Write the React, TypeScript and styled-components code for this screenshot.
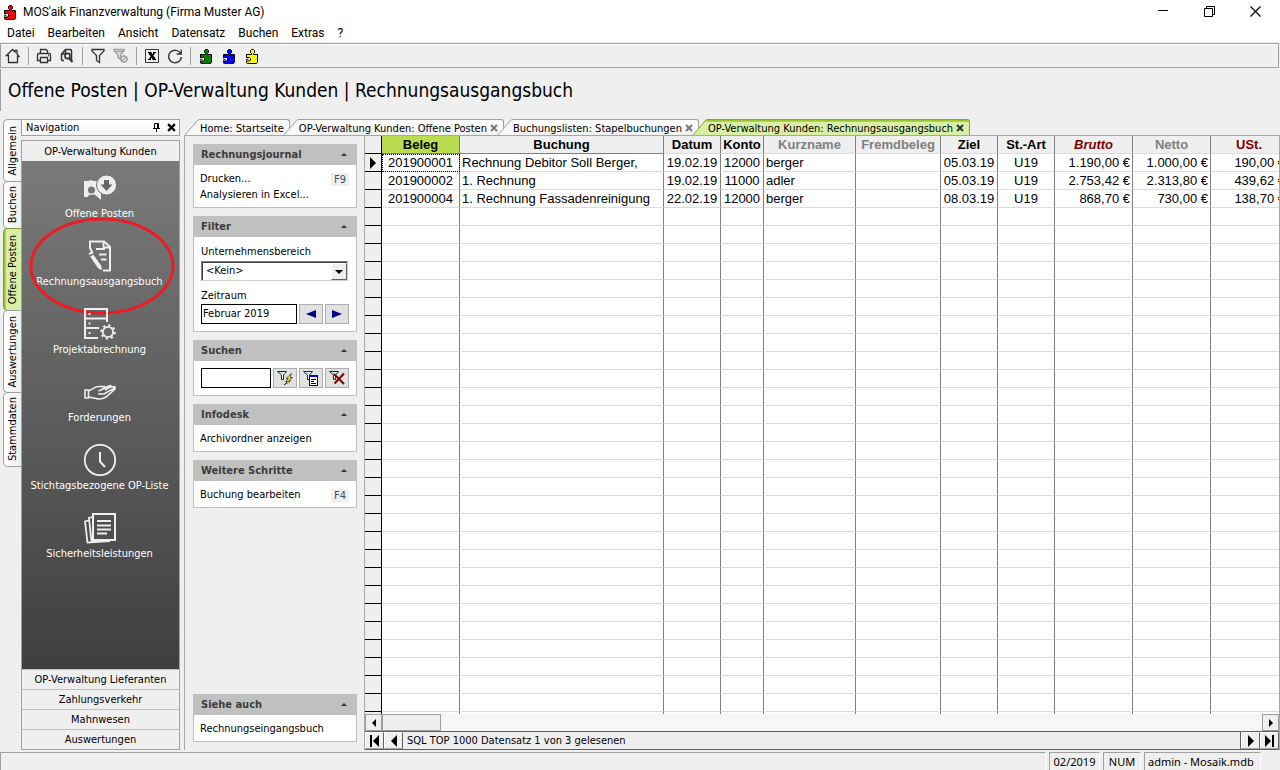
import React from "react";
import styled, { createGlobalStyle, css } from "styled-components";

const uiFont = `"DejaVu Sans Condensed", "DejaVu Sans", sans-serif`;
const systemFont = `Roboto, "Open Sans", sans-serif`;
const gridFont = `"Liberation Sans", Arial, sans-serif`;

const GlobalStyle = createGlobalStyle`
  *, *::before, *::after { box-sizing: border-box; }
  body { margin: 0; background: #efefef; color: #000; font: 11px/16px ${uiFont}; }
  button, input, select { font: inherit; color: inherit; margin: 0; padding: 0; border-radius: 0; }
  button { border: 0; background: none; display: block; }
  a { color: inherit; text-decoration: none; }
  svg { display: block; }
`;

const Window = styled.div`
  display: flex;
  flex-direction: column;
  height: 100vh;
  min-height: 640px;
  overflow: hidden;
`;

/* ---------- title and menu ---------- */

const TitleBar = styled.header`
  display: flex;
  align-items: center;
  flex: none;
  height: 23px;
  padding: 0 2px 0 3px;
  gap: 6px;
  background: #fff;
  font: 12px/16px ${systemFont};
`;

const TitleText = styled.span`
  flex: 1;
`;

const WindowButtons = styled.div`
  display: flex;
`;

const WindowButton = styled.button`
  display: flex;
  align-items: center;
  justify-content: center;
  width: 46px;
  height: 20px;
`;

const MenuBar = styled.nav`
  display: flex;
  flex: none;
  gap: 13px;
  height: 19px;
  padding: 2px 7px 0;
  background: #fff;
  font: 12px/16px ${systemFont};
`;

const ToolBar = styled.div`
  display: flex;
  align-items: center;
  flex: none;
  height: 25px;
  margin: 1px 1px 0 0;
  border: 1px solid #a0a0a0;
  box-shadow: inset 0 1px 0 #fff;
`;

const ToolButton = styled.button`
  display: flex;
  align-items: center;
  justify-content: center;
  width: 23px;
  height: 22px;
`;

const ToolSeparator = styled.span`
  width: 1px;
  height: 18px;
  margin: 0 3px 0 4px;
  background: #a0a0a0;
`;

const PageTitle = styled.h1`
  flex: none;
  margin: 1px 0 8px;
  padding: 0 0 0 7px;
  border-left: 1px solid #a0a0a0;
  font: 19px/42px ${uiFont};
  white-space: nowrap;
`;

/* ---------- main columns ---------- */

const Main = styled.main`
  display: flex;
  flex: 1;
  min-height: 0;
  padding-left: 3px;
`;

const SideTabs = styled.div`
  display: flex;
  flex-direction: column;
  flex: none;
  width: 18px;
`;

const SideTab = styled.button<{ $size: number; $active?: boolean }>`
  display: flex;
  align-items: center;
  justify-content: center;
  height: ${(p) => p.$size}px;
  margin-bottom: -1px;
  border: 1px solid #a0a0a0;
  border-right-width: 0;
  border-radius: 5px 0 0 5px;
  background: linear-gradient(to right, #fff, #efefef);
  ${(p) =>
    p.$active &&
    css`
      border-color: #7a9a35;
      background: linear-gradient(to right, #8fc31f 0, #b4d95a 2px, #d9efa5 2px, #d9efa5 100%);
    `}
  span {
    writing-mode: vertical-rl;
    transform: rotate(180deg);
    white-space: nowrap;
  }
`;

const Navigation = styled.aside`
  display: flex;
  flex-direction: column;
  flex: none;
  gap: 4px;
  width: 159px;
  margin-right: 4px;
`;

const NavCaption = styled.div`
  display: flex;
  align-items: center;
  flex: none;
  gap: 7px;
  height: 17px;
  padding: 0 3px 0 4px;
  border: 1px solid #a0a0a0;
  background: linear-gradient(#fff, #f4f4f4);
  line-height: 15px;
  span { flex: 1; }
`;

const Accordion = styled.div`
  display: flex;
  flex-direction: column;
  flex: 1;
  min-height: 0;
  border: 1px solid #a0a0a0;
`;

const AccordionHeader = styled.button<{ $divided?: boolean }>`
  flex: none;
  width: 100%;
  height: 20px;
  padding-top: 1px;
  text-align: center;
  border-top: ${(p) => (p.$divided ? "1px solid #c0c0c0" : "0")};
`;

const NavList = styled.div`
  display: flex;
  flex-direction: column;
  flex: 1;
  gap: 18px;
  min-height: 0;
  padding: 11px 2px 0 0;
  background: linear-gradient(#7a7a7a, #3f3f3f);
  color: #fff;
`;

const NavItem = styled.a`
  position: relative;
  display: flex;
  flex-direction: column;
  align-items: center;
  gap: 2px;
  white-space: nowrap;
`;

const Highlight = styled.svg`
  position: absolute;
  left: 7px;
  top: -23px;
`;

/* ---------- document area ---------- */

const Documents = styled.section`
  display: flex;
  flex-direction: column;
  flex: 1;
  min-width: 0;
`;

const TabStrip = styled.div`
  display: flex;
  flex: none;
  height: 17px;
  padding-left: 1px;
  background: linear-gradient(#aca899, #aca899) bottom / 100% 1px no-repeat;
`;

const DocTab = styled.div<{ $active?: boolean }>`
  display: flex;
  height: ${(p) => (p.$active ? 17 : 16)}px;
  margin-right: -6px;
`;

const DocTabBody = styled.div<{ $active?: boolean }>`
  display: flex;
  align-items: center;
  gap: 3px;
  height: 16px;
  padding-right: 5px;
  border: 1px solid ${(p) => (p.$active ? "#7fa336" : "#a0a0a0")};
  border-left: 0;
  border-bottom: 0;
  border-top-right-radius: 3px;
  background: ${(p) =>
    p.$active ? "linear-gradient(#8fc31f 0, #b4d95a 2px, #d9efa5 2px)" : "linear-gradient(#fff, #f1f1f1)"};
  line-height: 15px;
  white-space: nowrap;
  a { padding-top: 2px; }
`;

const Workspace = styled.div`
  display: flex;
  flex: 1;
  min-height: 0;
  border-right: 1px solid #aca899;
`;

const TaskPane = styled.div`
  display: flex;
  flex-direction: column;
  flex: none;
  gap: 8px;
  width: 181px;
  padding: 8px 7px 8px 8px;
  border: solid #aca899;
  border-width: 0 1px;
`;

const Card = styled.section<{ $last?: boolean }>`
  border: 1px solid #c0c0c0;
  border-top: 0;
  background: #fff;
  margin-top: ${(p) => (p.$last ? "auto" : "0")};
`;

const CardHeader = styled.h2`
  display: flex;
  align-items: center;
  justify-content: space-between;
  height: 21px;
  margin: 0;
  padding: 0 9px 0 7px;
  background: #c0c0c0;
  color: #3c3c3c;
  font-size: 11px;
  line-height: 21px;
`;

const CardBody = styled.div<{ $form?: boolean }>`
  display: flex;
  flex-direction: column;
  padding: ${(p) => (p.$form ? "7px" : "6px 7px 4px")};
`;

const TaskRow = styled.div`
  display: flex;
  align-items: center;
  justify-content: space-between;
  height: 16px;
  a { margin-left: -1px; }
`;

const Key = styled.kbd`
  width: 18px;
  background: #efefef;
  color: #3b4f5f;
  font: 11px/13px ${uiFont};
  text-align: center;
`;

const FieldLabel = styled.label`
  height: 16px;
`;

const SelectBox = styled.div`
  display: grid;
  grid-template-columns: 1fr 16px;
  height: 20px;
  margin: 1px 1px 7px 0;
  border: 1px solid #d4d0c8;
  border-top-color: #808080;
  border-left-color: #808080;
  box-shadow: inset 1px 1px 0 #404040;
  background: #fff;
`;

const Select = styled.select`
  grid-area: 1 / 1 / 2 / 3;
  width: 100%;
  padding: 0 4px;
  border: 0;
  appearance: none;
  background: transparent;
`;

const SelectArrow = styled.span`
  grid-area: 1 / 2 / 2 / 3;
  display: flex;
  align-items: center;
  justify-content: center;
  margin-top: 1px;
  border: 1px solid #fff;
  border-right-color: #606060;
  border-bottom-color: #606060;
  background: #efefef;
  pointer-events: none;
`;

const FieldRow = styled.div`
  display: flex;
  gap: 2px;
  height: 20px;
`;

const TextInput = styled.input`
  flex: 1;
  min-width: 0;
  padding: 0 1px;
  border: 1px solid #000;
  background: #fff;
`;

const SmallButton = styled.button`
  display: flex;
  align-items: center;
  justify-content: center;
  flex: none;
  width: 24px;
  border: 1px solid #adadad;
  background: #e1e1e1;
`;

/* ---------- data grid ---------- */

const GridPane = styled.div`
  display: flex;
  flex-direction: column;
  flex: 1;
  min-width: 0;
`;

const GridScroll = styled.div`
  flex: 1;
  min-height: 0;
  overflow: hidden;
  background: #fff;
`;

const Table = styled.table`
  width: 923px;
  table-layout: fixed;
  border-spacing: 0;
  font: 13px/17px ${gridFont};
`;

const Column = styled.col<{ $width: number }>`
  width: ${(p) => p.$width}px;
`;

const HeaderCell = styled.th<{ $color?: string; $italic?: boolean; $sorted?: boolean; $dark?: boolean }>`
  height: 18px;
  padding: 0;
  border-right: 1px solid #808080;
  border-bottom: 1px solid ${(p) => (p.$dark ? "#808080" : "#dcdcdc")};
  background: ${(p) => (p.$sorted ? "#b9dc50" : "#efefef")};
  color: ${(p) => p.$color || "#000"};
  font-style: ${(p) => (p.$italic ? "italic" : "normal")};
  white-space: nowrap;
`;

const SelectorHead = styled.th`
  height: 18px;
  padding: 0;
  border-right: 1px solid #000;
  border-bottom: 1px solid #000;
  background: #efefef;
`;

const SelectorCell = styled.td`
  height: 18px;
  padding: 0 0 0 5px;
  border-right: 1px solid #000;
  border-bottom: 1px solid #000;
  background: #efefef;
`;

const Cell = styled.td<{ $align?: string; $focused?: boolean }>`
  height: 18px;
  padding: 0 2px;
  border-right: 1px solid #808080;
  border-bottom: 1px solid #dcdcdc;
  text-align: ${(p) => p.$align || "left"};
  white-space: nowrap;
  ${(p) => p.$focused && css`outline: 1px dotted #000; outline-offset: -1px;`}
`;

const ScrollBar = styled.div`
  display: flex;
  flex: none;
  height: 17px;
  background: repeating-conic-gradient(#fff 0 25%, #efefef 0 50%) 0 0 / 2px 2px;
`;

const ScrollButton = styled.button`
  display: flex;
  align-items: center;
  justify-content: center;
  width: 17px;
  border: 1px solid #a0a0a0;
  background: #efefef;
`;

const ScrollThumb = styled.div`
  width: 59px;
  border: 1px solid #a0a0a0;
  background: #efefef;
`;

const Spacer = styled.div`
  flex: 1;
`;

const RecordBar = styled.div`
  display: flex;
  flex: none;
  height: 19px;
  border: solid #606060;
  border-width: 1px 0;
  line-height: 18px;
`;

const RecordButton = styled.button`
  display: flex;
  align-items: center;
  justify-content: center;
  width: 19px;
  border: 1px solid #fff;
  border-right-color: #606060;
  border-bottom-color: #a0a0a0;
`;

const RecordText = styled.span`
  flex: 1;
  padding-left: 4px;
  border-right: 1px solid #606060;
`;

/* ---------- status bar ---------- */

const StatusBar = styled.footer`
  display: flex;
  flex: none;
  gap: 3px;
  height: 18px;
  margin-top: 2px;
  padding-right: 19px;
  font: 11px/17px "Noto Sans", sans-serif;
`;

const StatusPanel = styled.div<{ $width?: number }>`
  flex: ${(p) => (p.$width ? "none" : "1")};
  width: ${(p) => (p.$width ? p.$width + "px" : "auto")};
  padding-left: 3px;
  border: 1px solid #a0a0a0;
  border-right-color: #fff;
  border-bottom: 0;
  white-space: nowrap;
`;

const StatusCenter = styled(StatusPanel)`
  padding-left: 0;
  text-align: center;
`;

/* ---------- drawings ---------- */

const Puzzle = ({ color }: { color: string }) => (
  <svg width="14" height="16" viewBox="0 0 14 16" aria-hidden="true">
    <path
      d="M1.5 6.5H6.5V5.5L5.5 4.5V2.5L6.5 1.5H8.5L9.5 2.5V4.5L8.5 5.5V6.5H12.5V14.5Q12 15.5 11 15.5H2.5Q1.5 15.5 1.5 14.5Z"
      fill={color}
      stroke="#000"
    />
    <path d="M1 9.5H4.5L5.5 10.5V12L4.5 13H1" fill="#fff" stroke="#000" />
    <path d="M1 11.3H3.5" stroke="#000" />
  </svg>
);

const Line = ({ children, size = 16, color = "#333" }: { children: React.ReactNode; size?: number; color?: string }) => (
  <svg width={size} height={size} viewBox={`0 0 ${size} ${size}`} fill="none" stroke={color} aria-hidden="true">
    {children}
  </svg>
);

const HomeIcon = () => (
  <Line>
    <path d="M1.5 7.5 7.5 1.5 10 4V2.5H12V6L14 8.5H12.5V14.5H3.5V7.5Z" strokeWidth="1.3" />
  </Line>
);
const PrintIcon = () => (
  <Line>
    <path d="M4.5 5.5V1.5H10L11.5 3V5.5M4.5 12.5H1.5V7Q1.5 5.5 3 5.5H13Q14.5 5.5 14.5 7V12.5H11.5M4.5 9.5H11.5V14.5H4.5Z" strokeWidth="1.3" />
    <path d="M12 7.5H13" strokeWidth="1.3" />
  </Line>
);
const PreviewIcon = () => (
  <Line>
    <path d="M5 12.5H3.5Q2.5 12.5 2.5 11V6L6.5 1.5H11Q12.5 1.5 12.5 3V12M6.5 2V6H2.5" strokeWidth="1.5" />
    <circle cx="8.5" cy="8" r="2.6" strokeWidth="1.6" />
    <path d="M10 10 13.5 14" strokeWidth="2" />
  </Line>
);
const FilterIcon = () => (
  <Line>
    <path d="M2 1.5H14V3L9.5 7.5V14.5L6.5 12.5V7.5L2 3Z" strokeWidth="1.3" />
  </Line>
);
const FilterOffIcon = () => (
  <Line color="#a0a0a0">
    <path d="M1 1.5H11V3L7.5 6.5V11L5 9.5V6.5L1 3ZM3 3.5H10" strokeWidth="1.5" />
    <circle cx="11" cy="11" r="3" strokeWidth="1.5" />
    <path d="M9 13 13 9" strokeWidth="1.3" />
  </Line>
);
const ExcelIcon = () => (
  <Line>
    <path d="M1.5 1.5H14.5V14.5H1.5Z" />
    <path d="M5.5 4.5 10.5 11.5" stroke="#000" strokeWidth="2.8" />
    <path d="M10.8 4.5 5.2 11.5" stroke="#000" strokeWidth="1.4" />
    <path d="M4 4.5H7.5M9 4.5H12M4 11.5H7M8.5 11.5H12" stroke="#000" />
  </Line>
);
const RefreshIcon = () => (
  <Line>
    <path d="M13.8 6A6.3 6.3 0 1 0 14.3 9M14.2 1.5V6H9.7" strokeWidth="1.4" />
  </Line>
);

const CrossIcon = ({ color = "#222", size = 8 }: { color?: string; size?: number }) => (
  <svg width={size} height={size} viewBox="0 0 8 8" aria-hidden="true">
    <path d="M1 1 7 7M7 1 1 7" stroke={color} strokeWidth="2" />
  </svg>
);

const Triangle = ({ dir, size, color = "#000" }: { dir: "l" | "r" | "u" | "d"; size: number; color?: string }) => {
  const half = size;
  const wide = size * 2;
  const shape = {
    l: [half, wide, `M${half} 0V${wide}L0 ${half}Z`],
    r: [half, wide, `M0 0V${wide}L${half} ${half}Z`],
    u: [wide, half, `M0 ${half}H${wide}L${half} 0Z`],
    d: [wide, half, `M0 0H${wide}L${half} ${half}Z`],
  }[dir] as [number, number, string];
  return (
    <svg width={shape[0]} height={shape[1]} aria-hidden="true">
      <path d={shape[2]} fill={color} />
    </svg>
  );
};

const PeriodArrow = ({ back }: { back?: boolean }) => (
  <svg width="10" height="8" aria-hidden="true">
    <path d={back ? "M10 0V8L0 4Z" : "M0 0V8L10 4Z"} fill="#000080" />
  </svg>
);

const EndArrow = ({ first }: { first?: boolean }) => (
  <svg width="11" height="12" aria-hidden="true">
    <path d={first ? "M1 0H3V12H1ZM10 0V12L4 6Z" : "M8 0H10V12H8ZM1 0V12L7 6Z"} />
  </svg>
);

const SmallFunnel = () => (
  <>
    <path d="M1.5 1.5H10.5L7.5 5V9.5H5.5V5Z" fill="#fff" stroke="#222" />
    <path d="M4 2.5H7L5.8 4.2Z" fill="#6cc" />
  </>
);
const SearchRunIcon = () => (
  <svg width="18" height="16" aria-hidden="true">
    <SmallFunnel />
    <path d="M15.5 3.5 10 8.5H12.5L9.5 11.5H11.5L8 15 14.5 11H12.5L16.5 7.5H14Z" fill="#ff0" stroke="#333" strokeWidth=".8" />
  </svg>
);
const SearchListIcon = () => (
  <svg width="18" height="16" aria-hidden="true">
    <SmallFunnel />
    <path d="M7.5 6.5H15.5V15.5H7.5Z" fill="#fff" stroke="#000" />
    <path d="M7 6H16" stroke="#00f" strokeWidth="2" />
    <path d="M9 9.5H14M9 11.5H12M9 13.5H14" stroke="#000" />
  </svg>
);
const SearchClearIcon = () => (
  <svg width="18" height="16" aria-hidden="true">
    <SmallFunnel />
    <path d="M6 4 16 14M16 3.5 6.5 13.5" stroke="#800000" strokeWidth="2" />
  </svg>
);

const TabSlant = ({ active }: { active?: boolean }) => (
  <svg width="15" height="16" viewBox="0 0 15 16" aria-hidden="true">
    <path d="M0 16 13 1.5 15 .5V16Z" fill={active ? "#d9efa5" : "#f8f8f8"} />
    {active && <path d="M12 1.5H15" stroke="#9fcf3a" strokeWidth="2" />}
    <path d="M0 16 12.5 1.5Q13.5.5 15 .5" fill="none" stroke={active ? "#7fa336" : "#a0a0a0"} />
  </svg>
);

const navIcons: Record<string, React.ReactNode> = {
  open: (
    <>
      <path d="M0 9H4Q7 7.5 10 9H14V18L17 22V28L12.5 24 9.5 22H6L3.5 25H0Z" fill="#eee" stroke="none" />
      <circle cx="7.5" cy="18" r="4.3" fill="#777" stroke="#eee" strokeWidth="1.5" />
      <circle cx="22.5" cy="13" r="10" fill="#eee" stroke="#777" strokeWidth="1" />
      <path d="M20 8H25V12.5H28.5L22.5 19 16.5 12.5H20Z" fill="#666" stroke="none" />
    </>
  ),
  book: (
    <>
      <path d="M8.5 13 6 8V1.5H20L26 7V30.5H19" strokeWidth="2" />
      <path d="M19.5 1.5V7.5H26M12 9H21M15 14.5H22.5M17 19.5H22.5" strokeWidth="1.8" />
      <path d="M5.5 16.5 9.5 14 18 26 18.5 31 14 29Z" fill="#eee" stroke="#666" strokeWidth="1" />
      <path d="M4.5 15 5.5 12.5 8 12 9.5 13.5Z" fill="#eee" stroke="none" />
    </>
  ),
  project: (
    <>
      <path d="M23 14V1H1V30H14M1 10.5H23M1 20H15" strokeWidth="2" />
      <path d="M4.5 6H6.5M4.5 15.5H6.5M4.5 25H6.5" strokeWidth="2" />
      <circle cx="24" cy="24" r="5.2" strokeWidth="1.8" />
      <circle cx="24" cy="24" r="6.8" strokeWidth="2" strokeDasharray="2.2 3.14" />
    </>
  ),
  hand: (
    <>
      <path d="M1 14H4.5V22H1ZM4.5 15C9 13 11 10.5 15 10.5H20Q23 11.5 19 13L14.5 15M18 13 26 9.5Q28 9.5 26 11L21 14M25 11.5 30 10.5Q32 11.5 30.5 13.5L22 21Q17 24 12 22.5L4.5 21M14 18H20L30.5 12" strokeWidth="1.6" />
    </>
  ),
  clock: (
    <>
      <circle cx="16" cy="16" r="15.2" strokeWidth="1.8" />
      <path d="M16 8V17.5L21 23" strokeWidth="2" />
    </>
  ),
  papers: (
    <>
      <path d="M9 2H31V28H9Z" strokeWidth="2" />
      <path d="M13 9H27M13 13.5H27M13 17.5H27M13 21.5H23" strokeWidth="1.8" />
      <path d="M8.5 5 5 6 7.5 29.5 9 28.5M4.5 8.5 1 9.5 3.5 30.5 26 29" strokeWidth="1.8" />
    </>
  ),
};

const NavIcon = ({ name }: { name: string }) => (
  <svg width="32" height="32" viewBox="0 0 32 32" fill="none" stroke="#eee" aria-hidden="true">
    {navIcons[name]}
  </svg>
);

/* ---------- data ---------- */

const menus = ["Datei", "Bearbeiten", "Ansicht", "Datensatz", "Buchen", "Extras", "?"];

const sideTabs = [
  { label: "Allgemein", size: 63 },
  { label: "Buchen", size: 48 },
  { label: "Offene Posten", size: 83, active: true },
  { label: "Auswertungen", size: 83 },
  { label: "Stammdaten", size: 75 },
];

const navItems = [
  { icon: "open", label: "Offene Posten" },
  { icon: "book", label: "Rechnungsausgangsbuch", marked: true },
  { icon: "project", label: "Projektabrechnung" },
  { icon: "hand", label: "Forderungen" },
  { icon: "clock", label: "Stichtagsbezogene OP-Liste" },
  { icon: "papers", label: "Sicherheitsleistungen" },
];

const navGroups = ["OP-Verwaltung Lieferanten", "Zahlungsverkehr", "Mahnwesen", "Auswertungen"];

const docTabs = [
  { label: "Home: Startseite" },
  { label: "OP-Verwaltung Kunden: Offene Posten", closable: true },
  { label: "Buchungslisten: Stapelbuchungen", closable: true },
  { label: "OP-Verwaltung Kunden: Rechnungsausgangsbuch", closable: true, active: true },
];

type Col = { name: string; width: number; align?: string; color?: string; italic?: boolean; sorted?: boolean; dark?: boolean };
const columns: Col[] = [
  { name: "Beleg", width: 78, align: "center", sorted: true, dark: true },
  { name: "Buchung", width: 204, dark: true },
  { name: "Datum", width: 57, align: "center" },
  { name: "Konto", width: 43, align: "center" },
  { name: "Kurzname", width: 92, color: "#808080" },
  { name: "Fremdbeleg", width: 85, color: "#808080" },
  { name: "Ziel", width: 57, align: "center" },
  { name: "St.-Art", width: 57, align: "center" },
  { name: "Brutto", width: 78, align: "right", color: "#800000", italic: true },
  { name: "Netto", width: 78, align: "right", color: "#808080" },
  { name: "USt.", width: 77, align: "right", color: "#800000" },
];

const records = [
  ["201900001", "Rechnung Debitor Soll Berger,", "19.02.19", "12000", "berger", "", "05.03.19", "U19", "1.190,00 €", "1.000,00 €", "190,00 €"],
  ["201900002", "1. Rechnung", "19.02.19", "11000", "adler", "", "05.03.19", "U19", "2.753,42 €", "2.313,80 €", "439,62 €"],
  ["201900004", "1. Rechnung Fassadenreinigung", "22.02.19", "12000", "berger", "", "08.03.19", "U19", "868,70 €", "730,00 €", "138,70 €"],
];

const rows = [...records, ...Array.from({ length: 57 }, () => columns.map(() => ""))];

const TaskCard = ({ title, form, last, children }: { title: string; form?: boolean; last?: boolean; children: React.ReactNode }) => (
  <Card $last={last}>
    <CardHeader>
      {title}
      <Triangle dir="u" size={3} color="#333" />
    </CardHeader>
    <CardBody $form={form}>{children}</CardBody>
  </Card>
);

const DataGrid = () => (
  <Table>
    <colgroup>
      <Column $width={17} />
      {columns.map((c) => (
        <Column key={c.name} $width={c.width} />
      ))}
    </colgroup>
    <thead>
      <tr>
        <SelectorHead aria-label="Auswahl" />
        {columns.map((c) => (
          <HeaderCell key={c.name} $color={c.color} $italic={c.italic} $sorted={c.sorted} $dark={c.dark}>
            {c.name}
          </HeaderCell>
        ))}
      </tr>
    </thead>
    <tbody>
      {rows.map((row, r) => (
        <tr key={r}>
          <SelectorCell>{r === 0 && <Triangle dir="r" size={6} />}</SelectorCell>
          {row.map((value, c) => (
            <Cell key={c} $align={columns[c].align} $focused={r === 0 && c === 0}>
              {value}
            </Cell>
          ))}
        </tr>
      ))}
    </tbody>
  </Table>
);

export default function App() {
  return (
    <Window>
      <GlobalStyle />
      <TitleBar>
        <Puzzle color="#f00" />
        <TitleText>MOS'aik Finanzverwaltung (Firma Muster AG)</TitleText>
        <WindowButtons>
          <WindowButton aria-label="Minimieren">
            <svg width="11" height="11"><path d="M0 4.5H10" stroke="#000" /></svg>
          </WindowButton>
          <WindowButton aria-label="Verkleinern">
            <svg width="11" height="11" fill="none" stroke="#000"><path d="M.5 2.5H8.5V10.5H.5ZM2.5 2.5V.5H10.5V8.5H8.5" /></svg>
          </WindowButton>
          <WindowButton aria-label="Schließen">
            <svg width="11" height="11"><path d="M.5.5 10.5 10.5M10.5.5.5 10.5" stroke="#000" strokeWidth="1.2" /></svg>
          </WindowButton>
        </WindowButtons>
      </TitleBar>
      <MenuBar>
        {menus.map((m) => (
          <a href="#" key={m}>{m}</a>
        ))}
      </MenuBar>
      <ToolBar>
        <ToolButton aria-label="Startseite"><HomeIcon /></ToolButton>
        <ToolSeparator />
        <ToolButton aria-label="Drucken"><PrintIcon /></ToolButton>
        <ToolButton aria-label="Vorschau"><PreviewIcon /></ToolButton>
        <ToolSeparator />
        <ToolButton aria-label="Filter"><FilterIcon /></ToolButton>
        <ToolButton aria-label="Filter aufheben"><FilterOffIcon /></ToolButton>
        <ToolSeparator />
        <ToolButton aria-label="Excel"><ExcelIcon /></ToolButton>
        <ToolButton aria-label="Aktualisieren"><RefreshIcon /></ToolButton>
        <ToolSeparator />
        <ToolButton aria-label="Modul grün"><Puzzle color="#008000" /></ToolButton>
        <ToolButton aria-label="Modul blau"><Puzzle color="#00f" /></ToolButton>
        <ToolButton aria-label="Modul gelb"><Puzzle color="#ff0" /></ToolButton>
      </ToolBar>
      <PageTitle>Offene Posten | OP-Verwaltung Kunden | Rechnungsausgangsbuch</PageTitle>

      <Main>
        <SideTabs>
          {sideTabs.map((t) => (
            <SideTab key={t.label} $size={t.size} $active={t.active}>
              <span>{t.label}</span>
            </SideTab>
          ))}
        </SideTabs>

        <Navigation>
          <NavCaption>
            <span>Navigation</span>
            <button aria-label="Anheften">
              <svg width="7" height="9" fill="none" stroke="#000">
                <path d="M1.5 5V.5H5.5V5M4.5 1V5M0 5.5H7M3.5 6V9" />
              </svg>
            </button>
            <button aria-label="Schließen"><CrossIcon color="#000" size={9} /></button>
          </NavCaption>
          <Accordion>
            <AccordionHeader>OP-Verwaltung Kunden</AccordionHeader>
            <NavList>
              {navItems.map((item) => (
                <NavItem href="#" key={item.label}>
                  <NavIcon name={item.icon} />
                  {item.label}
                  {item.marked && (
                    <Highlight width="146" height="98" aria-hidden="true">
                      <ellipse cx="73" cy="49" rx="71" ry="47" fill="none" stroke="#ed1c24" strokeWidth="3" />
                    </Highlight>
                  )}
                </NavItem>
              ))}
            </NavList>
            {navGroups.map((g) => (
              <AccordionHeader key={g} $divided>{g}</AccordionHeader>
            ))}
          </Accordion>
        </Navigation>

        <Documents>
          <TabStrip>
            {docTabs.map((t) => (
              <DocTab key={t.label} $active={t.active}>
                <TabSlant active={t.active} />
                <DocTabBody $active={t.active}>
                  <a href="#">{t.label}</a>
                  {t.closable && (
                    <button aria-label="Tab schließen"><CrossIcon color={t.active ? "#333" : "#777"} /></button>
                  )}
                </DocTabBody>
              </DocTab>
            ))}
          </TabStrip>
          <Workspace>
            <TaskPane>
              <TaskCard title="Rechnungsjournal">
                <TaskRow><a href="#">Drucken...</a><Key>F9</Key></TaskRow>
                <TaskRow><a href="#">Analysieren in Excel...</a></TaskRow>
              </TaskCard>
              <TaskCard title="Filter" form>
                <FieldLabel htmlFor="area">Unternehmensbereich</FieldLabel>
                <SelectBox>
                  <Select id="area"><option>&lt;Kein&gt;</option></Select>
                  <SelectArrow><Triangle dir="d" size={4} /></SelectArrow>
                </SelectBox>
                <FieldLabel htmlFor="period">Zeitraum</FieldLabel>
                <FieldRow>
                  <TextInput id="period" defaultValue="Februar 2019" />
                  <SmallButton aria-label="Zurück"><PeriodArrow back /></SmallButton>
                  <SmallButton aria-label="Weiter"><PeriodArrow /></SmallButton>
                </FieldRow>
              </TaskCard>
              <TaskCard title="Suchen" form>
                <FieldRow>
                  <TextInput aria-label="Suchen" />
                  <SmallButton aria-label="Suche starten"><SearchRunIcon /></SmallButton>
                  <SmallButton aria-label="Suche auswählen"><SearchListIcon /></SmallButton>
                  <SmallButton aria-label="Suche löschen"><SearchClearIcon /></SmallButton>
                </FieldRow>
              </TaskCard>
              <TaskCard title="Infodesk">
                <TaskRow><a href="#">Archivordner anzeigen</a></TaskRow>
              </TaskCard>
              <TaskCard title="Weitere Schritte">
                <TaskRow><a href="#">Buchung bearbeiten</a><Key>F4</Key></TaskRow>
              </TaskCard>
              <TaskCard title="Siehe auch" last>
                <TaskRow><a href="#">Rechnungseingangsbuch</a></TaskRow>
              </TaskCard>
            </TaskPane>
            <GridPane>
              <GridScroll><DataGrid /></GridScroll>
              <ScrollBar>
                <ScrollButton aria-label="Nach links"><Triangle dir="l" size={4} /></ScrollButton>
                <ScrollThumb />
                <Spacer />
                <ScrollButton aria-label="Nach rechts"><Triangle dir="r" size={4} /></ScrollButton>
              </ScrollBar>
              <RecordBar>
                <RecordButton aria-label="Erster Datensatz"><EndArrow first /></RecordButton>
                <RecordButton aria-label="Voriger Datensatz"><Triangle dir="l" size={6} /></RecordButton>
                <RecordText>SQL TOP 1000 Datensatz 1 von 3 gelesenen</RecordText>
                <RecordButton aria-label="Nächster Datensatz"><Triangle dir="r" size={6} /></RecordButton>
                <RecordButton aria-label="Letzter Datensatz"><EndArrow /></RecordButton>
              </RecordBar>
            </GridPane>
          </Workspace>
        </Documents>
      </Main>

      <StatusBar>
        <StatusPanel />
        <StatusCenter $width={51}>02/2019</StatusCenter>
        <StatusCenter $width={38}>NUM</StatusCenter>
        <StatusPanel $width={117}>admin - Mosaik.mdb</StatusPanel>
      </StatusBar>
    </Window>
  );
}
